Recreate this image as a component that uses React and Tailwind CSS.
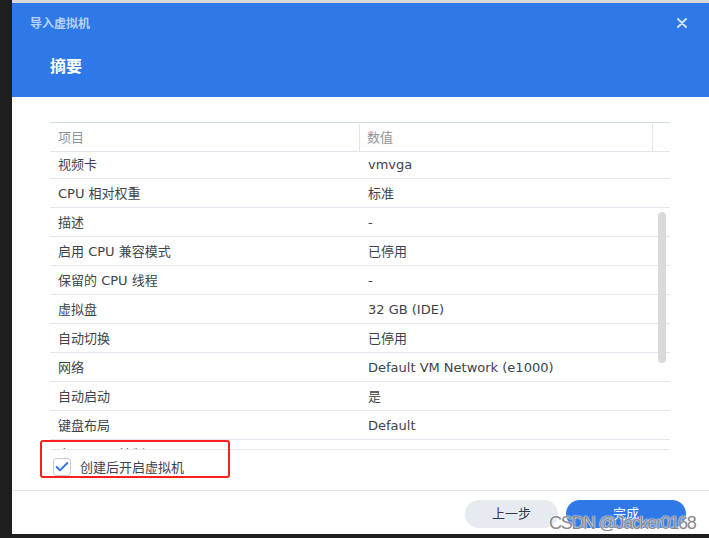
import { Check } from 'lucide-react';

const rows = [
  ['视频卡', 'vmvga'],
  ['CPU 相对权重', '标准'],
  ['描述', '-'],
  ['启用 CPU 兼容模式', '已停用'],
  ['保留的 CPU 线程', '-'],
  ['虚拟盘', '32 GB (IDE)'],
  ['自动切换', '已停用'],
  ['网络', 'Default VM Network (e1000)'],
  ['自动启动', '是'],
  ['键盘布局', 'Default'],
  ['启用 USB 控制器', 'USB 2.0'],
];

const font = { fontFamily: '"DejaVu Sans", "Noto Sans CJK SC", sans-serif' };

function SummaryTable() {
  return (
    <div className="w-[620px]">
      {/* header row */}
      <div className="flex h-[30px] border-y border-t-[#cfdbe7] border-b-[#e1e6ec] pt-[1px] text-[13px] text-[#8f949a]">
        <div className="flex w-[310px] items-center border-r border-[#e1e6ec] pl-[8px]">项目</div>
        <div className="flex w-[293px] items-center border-r border-[#e1e6ec] pl-[7px]">数值</div>
        <div className="flex-1" />
      </div>

      {/* scrolled body */}
      <div className="relative h-[298px] overflow-hidden border-b border-[#e4e8ee]">
        <div className="-mt-[2px]">
          {rows.map(([k, v]) => (
            <div key={k} className="flex h-[29px] items-center border-b border-[#e4e8ee] pt-[2px] text-[13px] text-[#3d434b]">
              <div className="w-[310px] pl-[8px]">{k}</div>
              <div className="pl-[8px]">{v}</div>
            </div>
          ))}
        </div>
        <div className="absolute left-[608px] top-[60px] h-[151px] w-[8px] rounded-full bg-[#dadada]" />
      </div>
    </div>
  );
}

export default function App() {
  return (
    <div className="relative flex h-[538px] w-[709px] overflow-hidden bg-[#1e1e1e]" style={font}>
      <div className="w-[12px] shrink-0" />
      <div className="flex h-[534px] flex-1 flex-col">
        <div className="h-[3px] bg-[#d9d9d9]" />

        {/* blue header */}
        <div className="relative h-[94px] bg-[#2e78e8]">
          <div className="pl-[18px] pt-[15px] text-[12px] font-semibold leading-[12px] text-[#b8d3f8]">导入虚拟机</div>
          <div className="pl-[38px] pt-[29px] text-[16px] font-semibold leading-[16px] text-white">摘要</div>
          <button className="absolute right-[22px] top-[15px] text-[#cfe0fb]">
            <svg width="10" height="10" viewBox="0 0 10 10" stroke="currentColor" strokeWidth="2" strokeLinecap="round">
              <path d="M1 1L9 9M9 1L1 9" />
            </svg>
          </button>
        </div>

        {/* body */}
        <div className="flex-1 bg-white pl-[38px] pt-[25px]">
          <SummaryTable />
          <div className="mt-[7px] flex items-center pl-[3px]">
            <span className="flex h-[18px] w-[18px] items-center justify-center rounded-[3px] border border-[#c3ccd6] bg-white">
              <Check size={16} strokeWidth={3} className="text-[#2e78e8]" />
            </span>
            <span className="ml-[9px] pt-[1px] text-[13px] text-[#3d434b]">创建后开启虚拟机</span>
          </div>
        </div>

        {/* footer */}
        <div className="flex h-[44px] justify-end gap-[8px] border-t border-[#e1e6ec] bg-white pr-[23px] pt-[9px]">
          <button className="h-[28px] w-[93px] rounded-full bg-[#e6ebf2] text-[13px] text-[#353a40]">上一步</button>
          <button className="h-[28px] w-[120px] rounded-full bg-[#2e78e8] text-[13px] text-white">完成</button>
        </div>
      </div>

      {/* annotation box */}
      <div className="absolute left-[40px] top-[440px] h-[38px] w-[190px] rounded-[3px] border-2 border-[#fb1f1f]" />

      {/* watermark */}
      <div
        className="absolute left-[549px] top-[510px] text-[18px] tracking-[-1.3px] text-[#8a8a8a] [text-shadow:0_0_2px_#fff,0_0_1px_#fff]"
        style={{ fontFamily: '"Liberation Sans", sans-serif' }}
      >
        CSDN @Jacker0168
      </div>
    </div>
  );
}
